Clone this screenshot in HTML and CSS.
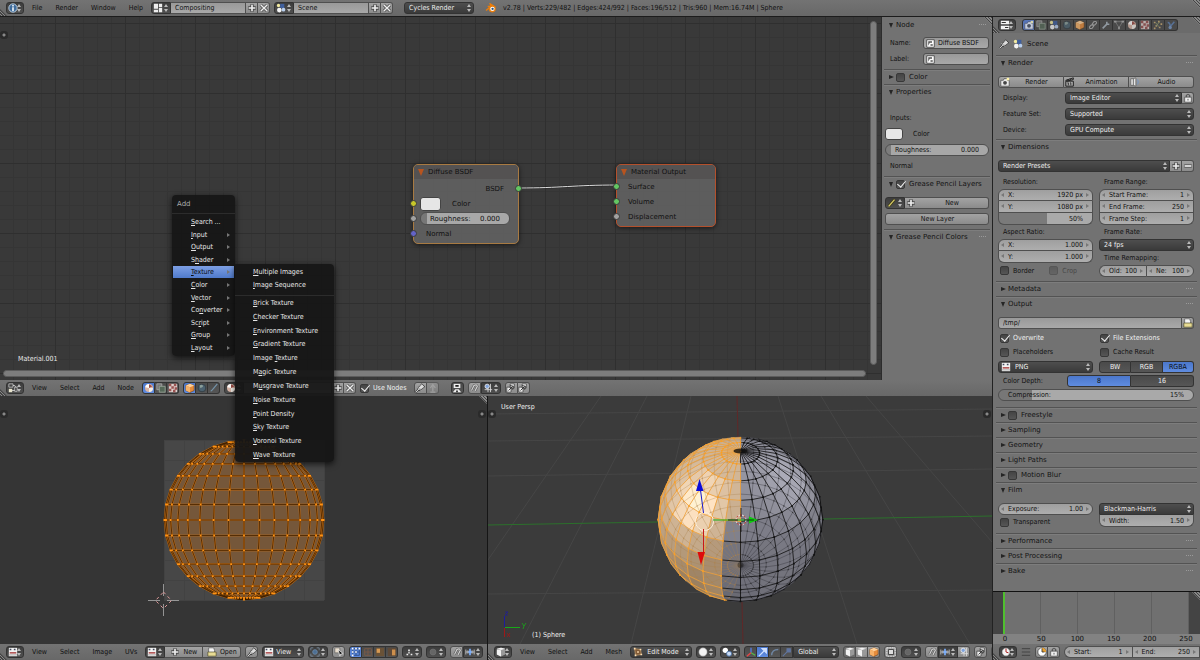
FILE: index.html
```html
<!DOCTYPE html>
<html lang="en">
<head>
<meta charset="utf-8">
<title>Blender</title>
<link rel="stylesheet" href="styles.css">
</head>
<body>
<svg class="defs" aria-hidden="true">
  <symbol id="i-info" viewBox="0 0 12 12"><circle cx="6" cy="6" r="5" fill="#3f6c9c" stroke="#cfe0ee" stroke-width="1"/><path d="M6 2.5v1.6M6 5v4.5" stroke="#fff" stroke-width="1.8"/></symbol>
  <symbol id="i-layout" viewBox="0 0 12 12"><path d="M1 1h5v6H1zM7 1h4v4H7zM1 8h5v3H1zM7 6h4v5H7z" fill="#ededed"/></symbol>
  <symbol id="i-scene" viewBox="0 0 12 12"><circle cx="3" cy="3" r="2" fill="#f1e9a0"/><path d="M5 1h5v5H5z" fill="#3f5f9d"/><circle cx="4" cy="8.500" r="2.800" fill="#f4f4f4"/><circle cx="9" cy="8" r="2.200" fill="#b9cfee"/></symbol>
  <symbol id="i-plus" viewBox="0 0 12 12"><path d="M6 1.500v9M1.500 6h9" stroke="#444" stroke-width="4"/><path d="M6 2v8M2 6h8" stroke="#eee" stroke-width="2"/></symbol>
  <symbol id="i-minus" viewBox="0 0 12 12"><path d="M1.500 6h9" stroke="#555" stroke-width="4"/><path d="M2 6h8" stroke="#eee" stroke-width="2"/></symbol>
  <symbol id="i-x" viewBox="0 0 12 12"><path d="M2 2l8 8M10 2l-8 8" stroke="#444" stroke-width="3.400"/><path d="M2 2l8 8M10 2l-8 8" stroke="#eee" stroke-width="1.700"/></symbol>
  <symbol id="i-blender" viewBox="0 0 14 12"><path d="M1 9l6-5H3M7 4L6 1l6 4" fill="none" stroke="#e87d0d" stroke-width="1.600"/><circle cx="8.500" cy="7" r="4.300" fill="#e87d0d"/><circle cx="8.700" cy="7" r="2.600" fill="#fff"/><circle cx="8.900" cy="7" r="1.400" fill="#265787"/></symbol>
  <symbol id="i-nodes" viewBox="0 0 12 12"><path d="M3 3h5l2 3M4 9h5" fill="none" stroke="#ddd"/><path d="M1 1h5v4H1zM8 5h3v5H8z" fill="#444" stroke="#ddd" stroke-width=".8"/><path d="M1 7h4v4H1z" fill="#e8e4cc"/></symbol>
  <symbol id="i-material" viewBox="0 0 12 12"><circle cx="6" cy="6" r="4.800" fill="#d9b5a6"/><path d="M6 6h4.800a4.800 4.800 0 0 1-4.800 4.800z" fill="#f3efe8"/><path d="M1.500 5a4.800 4.800 0 0 1 5-3.800L6 6z" fill="#fff"/><path d="M6 1.500L10 4 6 6z" fill="#9c4a44"/></symbol>
  <symbol id="i-composite" viewBox="0 0 12 12"><path d="M1 1h6v7H1z" fill="#777" stroke="#aaa"/><path d="M4 4h7v7H4z" fill="#556858" stroke="#98a598"/></symbol>
  <symbol id="i-texture" viewBox="0 0 12 12"><path d="M1 1h10v10H1z" fill="#dccfcd"/><path d="M1 1h3v3H1zM7 1h3v3H7zM4 4h3v3H4zM8 5h3v3H8zM1 7h3v3H1zM6 8h3v3H6z" fill="#9a5351"/></symbol>
  <symbol id="i-cube" viewBox="0 0 12 12"><path d="M1 3l5-2 5 2v6l-5 2.500L1 9z" fill="#e58c3c" stroke="#573111" stroke-width=".6"/><path d="M1 3l5 2 5-2-5-2z" fill="#ffd19c"/><path d="M1 3l5 2v6.500L1 9z" fill="#f6b168"/></symbol>
  <symbol id="i-whitecube" viewBox="0 0 12 12"><path d="M1 2l5-1 5 1v7l-5 2.500L1 9z" fill="#999"/><path d="M1 3l5 1v7.500L1 9zM1 2l5-1 5 1-5 1.500z" fill="#f2f2f2"/></symbol>
  <symbol id="i-world" viewBox="0 0 12 12"><circle cx="6" cy="6" r="4.600" fill="#4c6270" stroke="#303a40"/><path d="M3 3q3-2 4 0t-3 3z" fill="#8b9f9b"/></symbol>
  <symbol id="i-line" viewBox="0 0 12 12"><path d="M2 10q2-1 3-3l5-6" fill="none" stroke="#7392a8" stroke-width="1.400"/></symbol>
  <symbol id="i-pin" viewBox="0 0 12 12"><path d="M1 11l4-4M3 5l4 4M5 6l3-4 2.500 2.500L7 7z" stroke="#444" stroke-width="2.400" fill="#eee"/><path d="M1 11l4-4M3 5l4 4M5 6l3-4 2.500 2.500L7 7z" stroke="#ddd" stroke-width="1.100" fill="#ddd"/></symbol>
  <symbol id="i-up" viewBox="0 0 12 12"><path d="M4 11h6M7 10V4M4 6l3-4 3 4" stroke="#c2c2c2" fill="none" stroke-width="1.500"/></symbol>
  <symbol id="i-backdrop" viewBox="0 0 12 12"><path d="M2 1h8v5H2z" fill="#eee"/><path d="M1 11l3-3.500h4l3 3.500z" fill="#eee"/><path d="M4 2.500h4v2H4zM5 9h2v2H5z" fill="#222"/></symbol>
  <symbol id="i-magnet" viewBox="0 0 12 12"><path d="M3 9L6 3q3-2 4 1L7 10" fill="none" stroke="#555" stroke-width="2.800"/><path d="M3 9L6 3q3-2 4 1L7 10" fill="none" stroke="#d0d0d0" stroke-width="1.400"/></symbol>
  <symbol id="i-snap" viewBox="0 0 12 12"><path d="M2 8h9M6 5v6M9 1v10" stroke="#ddd" fill="none"/><circle cx="5" cy="4" r="2.600" fill="#7fa3dc" stroke="#eee"/></symbol>
  <symbol id="i-incr" viewBox="0 0 12 12"><path d="M1 3v6M3.500 4v4M8.500 4v4M11 3v6M1 6h10" stroke="#ccc"/><path d="M6 2v8M4 6h4" stroke="#7db1ff" stroke-width="2"/></symbol>
  <symbol id="i-copy" viewBox="0 0 12 12"><path d="M1 5h5v6H1zM5 1h5v5H5z" fill="#eee" stroke="#333" stroke-width=".8"/><path d="M3 9l5-5M5 3l4 1-1 4" stroke="#222" fill="none"/></symbol>
  <symbol id="i-image" viewBox="0 0 12 12"><path d="M1 1h10v10H1z" fill="#f2f2f2"/><path d="M2 6h8v2H2z" fill="#b35a5a"/><path d="M2 2h2v2H2zM7 2h2v2H7z" fill="#43485b"/><path d="M1 9h10v1H1z" fill="#999"/></symbol>
  <symbol id="i-folder" viewBox="0 0 12 12"><path d="M2 1h6l1 3v5H2z" fill="#f5f5f5" stroke="#444" stroke-width=".7"/><path d="M1 6h10v5H1z" fill="#e8dc94" stroke="#4d4a2c" stroke-width=".8"/></symbol>
  <symbol id="i-pivot" viewBox="0 0 12 12"><path d="M1 4V1h3M8 1h3v3M11 8v3H8M4 11H1V8" fill="none" stroke="#7d8ea0"/><circle cx="6" cy="6" r="2.800" fill="#4d6f94" stroke="#6c89a7"/></symbol>
  <symbol id="i-cursor" viewBox="0 0 12 12"><path d="M1 1h6v6H1z" fill="#e7dccb" stroke="#555" stroke-width=".7"/><path d="M5 3l6 5-3 .5L7 11z" fill="#111" stroke="#fff" stroke-width=".8"/></symbol>
  <symbol id="i-verts" viewBox="0 0 12 12"><path d="M2 2h8v8H2zM6 2v8M2 6h8" fill="none" stroke="#2e4d86"/><path d="M1 1h2v2H1zM5 1h2v2H5zM9 1h2v2H9zM1 5h2v2H1zM5 5h2v2H5zM1 9h2v2H1z" fill="#fff"/></symbol>
  <symbol id="i-edges" viewBox="0 0 12 12"><path d="M2 2h8v8H2zM6 2v8M2 6h8" fill="none" stroke="#7d5a46"/></symbol>
  <symbol id="i-face" viewBox="0 0 12 12"><path d="M1 1h10v10H1z" fill="#6a5237"/><path d="M2 2h4v5H2z" fill="#d79a54"/></symbol>
  <symbol id="i-island" viewBox="0 0 12 12"><path d="M1 1h10v10H1z" fill="#5d4938"/><path d="M6 3h4v7H6z" fill="#cd8f4c"/></symbol>
  <symbol id="i-dots" viewBox="0 0 12 12"><path d="M3 8h2v2H3zM5 3h2v2H5zM8 8h2v2H8z" fill="#eee"/><circle cx="6" cy="7" r="1.200" fill="#bbb"/></symbol>
  <symbol id="i-ring" viewBox="0 0 12 12"><circle cx="6" cy="6" r="3.500" fill="#666" stroke="#707070"/></symbol>
  <symbol id="i-ball" viewBox="0 0 12 12"><circle cx="6" cy="6" r="5" fill="#f3f3f3" stroke="#888" stroke-width=".6"/></symbol>
  <symbol id="i-two" viewBox="0 0 12 12"><circle cx="4" cy="4" r="3.200" fill="#fff"/><circle cx="8.500" cy="8" r="3" fill="#c9dbf4" stroke="#436ca5"/></symbol>
  <symbol id="i-edit" viewBox="0 0 12 12"><path d="M2 2l7 1 1 6-7 1z" fill="#805a36" stroke="#b99466"/><path d="M1 1h2v2H1zM8 2h2v2H8zM9 8h2v2H9zM2 9h2v2H2zM5 5h2v2H5z" fill="#ffe0b4"/></symbol>
  <symbol id="i-axes" viewBox="0 0 12 12"><path d="M6 7V1" stroke="#5a7fe8" stroke-width="1.500"/><path d="M6 7l5 3" stroke="#55bb44" stroke-width="1.500"/><path d="M6 7l-5 4" stroke="#e44" stroke-width="1.500"/></symbol>
  <symbol id="i-arrow" viewBox="0 0 12 12"><path d="M1 11l6-6M5 2h5v5z" stroke="#cfe0ff" stroke-width="1.500" fill="#cfe0ff"/></symbol>
  <symbol id="i-arc" viewBox="0 0 12 12"><path d="M2 10q0-7 8-7" stroke="#6f86a3" stroke-width="1.600" fill="none"/></symbol>
  <symbol id="i-scale" viewBox="0 0 12 12"><path d="M1 11l6-6M6 2h4v4H6z" stroke="#6075a0" stroke-width="1.300" fill="#6075a0"/></symbol>
  <symbol id="i-select" viewBox="0 0 12 12"><path d="M1 1h10v10H1z" fill="none" stroke="#f0f0f0" stroke-dasharray="2 1"/><path d="M3 3h6v6H3z" fill="#ddd" stroke="#333"/></symbol>
  <symbol id="i-props" viewBox="0 0 12 12"><path d="M1 1h10v4H1zM1 7h10v4H1z" fill="#f2f2f2"/><path d="M2 3h5M6 9h4" stroke="#333" stroke-width="1.300"/></symbol>
  <symbol id="i-camera" viewBox="0 0 12 12"><path d="M1 4h3l1-2h4v2h2v7H1z" fill="#e9e9e9" stroke="#333" stroke-width=".7"/><circle cx="6" cy="7" r="2.300" fill="#444"/><path d="M8 1h3v3H8z" fill="#fff3a8"/></symbol>
  <symbol id="i-clap" viewBox="0 0 12 12"><path d="M1 5h9v6H1zM1 4l9-3v2L2 5z" fill="#aaa" stroke="#222" stroke-width="1.200"/><path d="M3 7h1v3M6 7h1v3M3 3l1 2M6 2l1 2" stroke="#222" fill="none"/></symbol>
  <symbol id="i-speaker" viewBox="0 0 12 12"><path d="M1 2h3l3-1v10l-3-1H1z" fill="#e5e5e5" stroke="#555" stroke-width=".8"/><path d="M4 2v8" stroke="#555"/><path d="M9 3q2 3 0 6" stroke="#6a94cc" fill="none"/></symbol>
  <symbol id="i-link" viewBox="0 0 12 12"><path d="M2 8q-1 3 3 2l2-3q0-2-3-1zM10 4q1-3-3-2L5 5q0 2 3 1z" fill="none" stroke="#b0b0b0" stroke-width="1.300"/></symbol>
  <symbol id="i-wrench" viewBox="0 0 12 12"><path d="M2 10l5-5M7 2v3h3" stroke="#a9b5c0" stroke-width="1.900" fill="none"/></symbol>
  <symbol id="i-data" viewBox="0 0 12 12"><path d="M1.500 2h9L6 9zM6 9v2" fill="none" stroke="#888"/><path d="M0 1h3v2H0zM9 1h3v2H9zM5 8h2v3H5z" fill="#aaa"/></symbol>
  <symbol id="i-parts" viewBox="0 0 12 12"><path d="M1 2h2v2H1zM6 1h2v2H6zM9 4h2v2H9zM3 6h2v2H3zM7 8h2v2H7zM1 9h2v2H1z" fill="#c8a870"/><path d="M3 3l4 5M8 2l-4 5" stroke="#8f9e70"/></symbol>
  <symbol id="i-phys" viewBox="0 0 12 12"><path d="M2 3q3 0 3 5l5-6" stroke="#5c7eb0" stroke-width="1.800" fill="none"/><circle cx="5" cy="9" r="2" fill="#7898c5"/></symbol>
  <symbol id="i-lock" viewBox="0 0 12 12"><path d="M4 6V3q2-3 4 0v3" fill="none" stroke="#555" stroke-width="1.400"/><path d="M2 5h8v6H2z" fill="#eee" stroke="#444" stroke-width=".8"/><path d="M6 7v2" stroke="#444"/></symbol>
  <symbol id="i-node" viewBox="0 0 12 12"><path d="M1 1h10v10H1z" fill="#fff" stroke="#333"/><path d="M3 9V3h5v2H5M6 7h3v2H6z" fill="#555"/></symbol>
  <symbol id="i-pencil" viewBox="0 0 12 12"><path d="M2 10l7-8" stroke="#3b3810" stroke-width="3.200"/><path d="M2 10l7-8" stroke="#d8cc6b" stroke-width="1.600"/></symbol>
  <symbol id="i-clock" viewBox="0 0 12 12"><circle cx="6" cy="6" r="5" fill="#f3f3f3" stroke="#333" stroke-width=".8"/><path d="M6 2v4l3 1" stroke="#a22" fill="none" stroke-width="1.200"/></symbol>
  <symbol id="i-auto" viewBox="0 0 12 12"><circle cx="6" cy="6" r="5" fill="#fff" stroke="#333" stroke-width=".8"/><path d="M6 6V1a5 5 0 0 1 5 5z" fill="#e8a030"/><path d="M6 2v4h3" stroke="#333" fill="none"/></symbol>
  <symbol id="i-menu" viewBox="0 0 12 12"><path d="M1 2h10M1 6h10M1 10h10" stroke="#444" stroke-width="1.200"/></symbol>
</svg>

<div class="app">
  <header class="bar topbar">
    <button class="dd" aria-label="Editor type"><svg class="ic"><use href="#i-info"/></svg></button>
    <nav class="menus"><button>File</button><button>Render</button><button>Window</button><button>Help</button></nav>
    <div class="group idfield">
      <button class="dd" aria-label="Screen layout"><svg class="ic"><use href="#i-layout"/></svg></button>
      <input class="text" aria-label="Screen" value="Compositing">
      <button class="lt" aria-label="Add screen"><svg class="ic"><use href="#i-plus"/></svg></button>
      <button class="lt" aria-label="Delete screen"><svg class="ic"><use href="#i-x"/></svg></button>
    </div>
    <div class="group idfield">
      <button class="dd" aria-label="Browse scene"><svg class="ic"><use href="#i-scene"/></svg></button>
      <input class="text" aria-label="Scene" value="Scene">
      <button class="lt" aria-label="Add scene"><svg class="ic"><use href="#i-plus"/></svg></button>
      <button class="lt" aria-label="Delete scene"><svg class="ic"><use href="#i-x"/></svg></button>
    </div>
    <span class="sel engine"><select aria-label="Render engine"><option>Cycles Render</option></select></span>
    <svg class="ic logo"><use href="#i-blender"/></svg>
    <span class="stats">v2.78 | Verts:229/482 | Edges:424/992 | Faces:196/512 | Tris:960 | Mem:16.74M | Sphere</span>
    <span class="grip"></span>
  </header>

  <main class="work">
    <div class="left">
      <section class="node-editor">
        <div class="node-main">
          <div class="canvas">
            <svg class="wire" width="800" height="300"><path d="M519 171C560 171 575 168 617 168" fill="none" stroke="#222" stroke-width="2"/><path d="M519 171C560 171 575 168 617 168" fill="none" stroke="#ddd" stroke-width="1"/></svg>
            <div class="node diffuse">
              <h3>Diffuse BSDF</h3>
              <p class="out">BSDF<i class="sock green"></i></p>
              <p class="in"><i class="sock yellow"></i><span class="swatch"></span>Color</p>
              <p class="in"><i class="sock gray"></i><label class="slider"><span>Roughness:</span><input value="0.000"></label></p>
              <p class="in"><i class="sock violet"></i>Normal</p>
            </div>
            <div class="node output">
              <h3>Material Output</h3>
              <p class="in"><i class="sock green"></i>Surface</p>
              <p class="in"><i class="sock green"></i>Volume</p>
              <p class="in"><i class="sock gray"></i>Displacement</p>
            </div>
            <span class="tag">Material.001</span>
            <span class="knob tl"></span>
            <span class="hscroll"></span><span class="vscroll"></span>
          </div>
          <aside class="npanel">
            <span class="grip"></span>
            <h2 class="ttl open first grab">Node</h2>
            <div class="rows n1">
              <label class="field"><span>Name:</span><span class="box"><svg class="ic"><use href="#i-node"/></svg><input value="Diffuse BSDF"></span></label>
              <label class="field"><span>Label:</span><span class="box"><svg class="ic"><use href="#i-node"/></svg><input value=""></span></label>
            </div>
            <h2 class="ttl"><label><input type="checkbox">Color</label></h2>
            <h2 class="ttl open">Properties</h2>
            <div class="rows n2">
              <span class="line">Inputs:</span>
              <span class="line color"><span class="swatch"></span>Color</span>
              <label class="slider"><span>Roughness:</span><input value="0.000"></label>
              <span class="line">Normal</span>
            </div>
            <h2 class="ttl open"><label><input type="checkbox" checked>Grease Pencil Layers</label></h2>
            <div class="rows n3">
              <div class="group"><button class="dd" aria-label="Grease pencil"><svg class="ic"><use href="#i-pencil"/></svg></button><button class="lt grow"><svg class="ic"><use href="#i-plus"/></svg><span>New</span></button></div>
              <div class="group"><button class="lt grow"><span>New Layer</span></button></div>
            </div>
            <h2 class="ttl open grab">Grease Pencil Colors</h2>
          </aside>
        </div>
        <div class="bar">
          <button class="dd" aria-label="Editor type"><svg class="ic"><use href="#i-nodes"/></svg></button>
          <nav class="menus"><button>View</button><button>Select</button><button>Add</button><button>Node</button></nav>
          <div class="group dark"><button class="on" aria-label="Shader nodes"><svg class="ic"><use href="#i-material"/></svg></button><button aria-label="Compositing nodes"><svg class="ic"><use href="#i-composite"/></svg></button><button aria-label="Texture nodes"><svg class="ic"><use href="#i-texture"/></svg></button></div>
          <div class="group dark"><button class="on" aria-label="Object"><svg class="ic"><use href="#i-cube"/></svg></button><button aria-label="World"><svg class="ic"><use href="#i-world"/></svg></button><button aria-label="Line style"><svg class="ic"><use href="#i-line"/></svg></button></div>
          <div class="group matfield"><button class="dd" aria-label="Browse material"><svg class="ic"><use href="#i-material"/></svg></button><input class="text" aria-label="Material name" value=""><button class="lt" aria-label="Add"><svg class="ic"><use href="#i-plus"/></svg></button><button class="lt" aria-label="Unlink"><svg class="ic"><use href="#i-x"/></svg></button></div>
          <label class="check lit"><input type="checkbox" checked>Use Nodes</label>
          <div class="group gap-l"><button class="lt" aria-label="Pin"><svg class="ic"><use href="#i-pin"/></svg></button><button class="lt dim" aria-label="Parent"><svg class="ic"><use href="#i-up"/></svg></button></div>
          <div class="group dark gap-xl"><button aria-label="Backdrop"><svg class="ic"><use href="#i-backdrop"/></svg></button></div>
          <div class="group"><button class="lt" aria-label="Snap"><svg class="ic"><use href="#i-magnet"/></svg></button><button class="dd" aria-label="Snap element"><svg class="ic"><use href="#i-snap"/></svg></button></div>
          <div class="group"><button class="lt" aria-label="Copy"><svg class="ic"><use href="#i-copy"/></svg></button><button class="lt" aria-label="Paste"><svg class="ic"><use href="#i-copy"/></svg></button></div>
        </div>
      </section>

      <div class="lower">
        <section class="uv">
          <div class="view"><svg id="uv-mesh" viewBox="0 396 487 248" preserveAspectRatio="xMidYMid meet"></svg><span class="knob tl"></span><span class="knob tr"></span><span class="grip"></span></div>
          <div class="bar">
            <button class="dd" aria-label="Editor type"><svg class="ic"><use href="#i-image"/></svg></button>
            <nav class="menus"><button>View</button><button>Select</button><button>Image</button><button>UVs</button></nav>
            <div class="group"><button class="dd" aria-label="Browse image"><svg class="ic"><use href="#i-image"/></svg></button><button class="lt word"><svg class="ic"><use href="#i-plus"/></svg>New</button><button class="lt word"><svg class="ic"><use href="#i-folder"/></svg>Open</button></div>
            <div class="group"><button class="lt" aria-label="Pin"><svg class="ic"><use href="#i-pin"/></svg></button></div>
            <button class="dd word"><svg class="ic"><use href="#i-image"/></svg>View</button>
            <button class="dd" aria-label="Pivot"><svg class="ic"><use href="#i-pivot"/></svg></button>
            <div class="group"><button class="lt" aria-label="Sync selection"><svg class="ic"><use href="#i-cursor"/></svg></button></div>
            <div class="group dark"><button class="on" aria-label="Vertex"><svg class="ic"><use href="#i-verts"/></svg></button><button aria-label="Edge"><svg class="ic"><use href="#i-edges"/></svg></button><button aria-label="Face"><svg class="ic"><use href="#i-face"/></svg></button><button aria-label="Island"><svg class="ic"><use href="#i-island"/></svg></button></div>
            <button class="dd" aria-label="Sticky"><svg class="ic"><use href="#i-dots"/></svg></button>
            <button class="dd" aria-label="Proportional editing"><svg class="ic"><use href="#i-ring"/></svg></button>
            <div class="group"><button class="lt" aria-label="Snap"><svg class="ic"><use href="#i-magnet"/></svg></button><button class="dd" aria-label="Snap element"><svg class="ic"><use href="#i-incr"/></svg></button></div>
            <div class="group"><button class="lt" aria-label="More"></button></div>
          </div>
        </section>
        <section class="view3d">
          <div class="view"><svg id="mesh" viewBox="488 396 504 248" preserveAspectRatio="xMidYMid slice"></svg><span class="persp">User Persp</span><span class="obname">(1) Sphere</span><span class="knob tl"></span><span class="knob tr"></span></div>
          <div class="bar">
            <button class="dd" aria-label="Editor type"><svg class="ic"><use href="#i-whitecube"/></svg></button>
            <nav class="menus"><button>View</button><button>Select</button><button>Add</button><button>Mesh</button></nav>
            <span class="sel icon mode"><svg class="ic"><use href="#i-edit"/></svg><select aria-label="Mode"><option>Edit Mode</option></select></span>
            <button class="dd" aria-label="Shading"><svg class="ic"><use href="#i-ball"/></svg></button>
            <button class="dd" aria-label="Pivot"><svg class="ic"><use href="#i-two"/></svg></button>
            <div class="group dark"><button aria-label="Manipulator"><svg class="ic"><use href="#i-axes"/></svg></button><button class="on" aria-label="Translate"><svg class="ic"><use href="#i-arrow"/></svg></button><button aria-label="Rotate"><svg class="ic"><use href="#i-arc"/></svg></button><button aria-label="Scale"><svg class="ic"><use href="#i-scale"/></svg></button><span class="sel orient"><select aria-label="Orientation"><option>Global</option></select></span></div>
            <div class="group"><button class="lt press" aria-label="Vertex select"><svg class="ic"><use href="#i-whitecube"/></svg></button><button class="lt" aria-label="Edge select"><svg class="ic"><use href="#i-whitecube"/></svg></button><button class="lt" aria-label="Face select"><svg class="ic"><use href="#i-cube"/></svg></button></div>
            <div class="group"><button class="lt" aria-label="Limit selection"><svg class="ic"><use href="#i-select"/></svg></button></div>
            <button class="dd" aria-label="Proportional editing"><svg class="ic"><use href="#i-ring"/></svg></button>
            <div class="group"><button class="lt" aria-label="Snap"><svg class="ic"><use href="#i-magnet"/></svg></button><button class="dd" aria-label="Snap element"><svg class="ic"><use href="#i-incr"/></svg></button><button class="lt" aria-label="Snap target"><svg class="ic"><use href="#i-snap"/></svg></button></div>
            <div class="group"><button class="lt" aria-label="Render preview"><svg class="ic"><use href="#i-copy"/></svg></button></div>
            <div class="group"><button class="lt" aria-label="More"></button></div>
          </div>
        </section>
      </div>
    </div>

    <div class="right">
      <section class="props">
        <span class="grip"></span>
        <div class="bar tabs">
          <button class="dd" aria-label="Editor type"><svg class="ic"><use href="#i-props"/></svg></button>
          <div class="group dark"><button class="on" aria-label="Render"><svg class="ic"><use href="#i-camera"/></svg></button><button aria-label="Render layers"><svg class="ic"><use href="#i-composite"/></svg></button><button aria-label="Scene"><svg class="ic"><use href="#i-scene"/></svg></button><button aria-label="World"><svg class="ic"><use href="#i-world"/></svg></button><button aria-label="Object"><svg class="ic"><use href="#i-cube"/></svg></button><button aria-label="Constraints"><svg class="ic"><use href="#i-link"/></svg></button><button aria-label="Modifiers"><svg class="ic"><use href="#i-wrench"/></svg></button><button aria-label="Data"><svg class="ic"><use href="#i-data"/></svg></button><button aria-label="Material"><svg class="ic"><use href="#i-material"/></svg></button><button aria-label="Texture"><svg class="ic"><use href="#i-texture"/></svg></button><button aria-label="Particles"><svg class="ic"><use href="#i-parts"/></svg></button><button aria-label="Physics"><svg class="ic"><use href="#i-phys"/></svg></button></div>
        </div>
        <div class="crumb"><svg class="ic"><use href="#i-pin"/></svg><svg class="ic"><use href="#i-scene"/></svg>Scene</div>

        <h2 class="ttl open grab">Render</h2>
        <div class="rows r1">
          <div class="group"><button class="lt grow"><svg class="ic"><use href="#i-camera"/></svg><span>Render</span></button><button class="lt grow"><svg class="ic"><use href="#i-clap"/></svg><span>Animation</span></button><button class="lt grow"><svg class="ic"><use href="#i-speaker"/></svg><span>Audio</span></button></div>
          <div class="pair"><label for="disp">Display:</label><div class="group"><span class="sel"><select id="disp"><option>Image Editor</option></select></span><button class="lt" aria-label="Lock interface"><svg class="ic"><use href="#i-lock"/></svg></button></div></div>
          <div class="pair"><label for="feat">Feature Set:</label><span class="sel"><select id="feat"><option>Supported</option></select></span></div>
          <div class="pair"><label for="dev">Device:</label><span class="sel"><select id="dev"><option>GPU Compute</option></select></span></div>
        </div>

        <h2 class="ttl open">Dimensions</h2>
        <div class="rows r2">
          <div class="group"><span class="sel"><select aria-label="Render presets"><option>Render Presets</option></select></span><button class="lt" aria-label="Add preset"><svg class="ic"><use href="#i-plus"/></svg></button><button class="lt" aria-label="Remove preset"><svg class="ic"><use href="#i-minus"/></svg></button></div>
          <div class="cols">
            <div>
              <span class="cap">Resolution:</span>
              <div class="stack"><label class="num"><span>X:</span><input value="1920 px"></label><label class="num"><span>Y:</span><input value="1080 px"></label><label class="num pct"><input aria-label="Resolution percentage" value="50%"></label></div>
              <span class="cap">Aspect Ratio:</span>
              <div class="stack"><label class="num"><span>X:</span><input value="1.000"></label><label class="num"><span>Y:</span><input value="1.000"></label></div>
              <div class="checks"><label class="check"><input type="checkbox">Border</label><label class="check off"><input type="checkbox" disabled>Crop</label></div>
            </div>
            <div>
              <span class="cap">Frame Range:</span>
              <div class="stack"><label class="num"><span>Start Frame:</span><input value="1"></label><label class="num"><span>End Frame:</span><input value="250"></label><label class="num"><span>Frame Step:</span><input value="1"></label></div>
              <span class="cap">Frame Rate:</span>
              <span class="sel rate"><select aria-label="Frame rate"><option>24 fps</option></select></span>
              <span class="cap">Time Remapping:</span>
              <div class="duo"><label class="num"><span>Old:</span><input value="100"></label><label class="num"><span>Ne:</span><input value="100"></label></div>
            </div>
          </div>
        </div>

        <h2 class="ttl grab">Metadata</h2>
        <h2 class="ttl open grab">Output</h2>
        <div class="rows r3">
          <div class="group"><input class="text" aria-label="Output path" value="/tmp/"><button class="lt" aria-label="Browse"><svg class="ic"><use href="#i-folder"/></svg></button></div>
          <div class="checks grid"><label class="check lit"><input type="checkbox" checked>Overwrite</label><label class="check lit"><input type="checkbox" checked>File Extensions</label><label class="check"><input type="checkbox">Placeholders</label><label class="check"><input type="checkbox">Cache Result</label></div>
          <div class="cols"><span class="sel icon"><svg class="ic"><use href="#i-image"/></svg><select aria-label="Format"><option>PNG</option></select></span><div class="group dark seg"><button>BW</button><button>RGB</button><button class="on">RGBA</button></div></div>
          <div class="depth"><span>Color Depth:</span><div class="group dark seg"><button class="on">8</button><button>16</button></div></div>
          <label class="slider comp"><span>Compression:</span><input value="15%"></label>
        </div>

        <h2 class="ttl"><label><input type="checkbox">Freestyle</label></h2>
        <h2 class="ttl">Sampling</h2>
        <h2 class="ttl">Geometry</h2>
        <h2 class="ttl">Light Paths</h2>
        <h2 class="ttl"><label><input type="checkbox">Motion Blur</label></h2>
        <h2 class="ttl open">Film</h2>
        <div class="rows r4">
          <div class="cols">
            <div><label class="num alone"><span>Exposure:</span><input value="1.00"></label><label class="check"><input type="checkbox">Transparent</label></div>
            <div class="stack"><span class="sel"><select aria-label="Filter type"><option>Blackman-Harris</option></select></span><label class="num"><span>Width:</span><input value="1.50"></label></div>
          </div>
        </div>
        <h2 class="ttl grab">Performance</h2>
        <h2 class="ttl grab">Post Processing</h2>
        <h2 class="ttl grab">Bake</h2>
      </section>

      <section class="timeline">
        <div class="track"><span class="range"></span><span class="now"></span><span class="grip"></span></div>
        <div class="ruler"><span>0</span><span>50</span><span>100</span><span>150</span><span>200</span><span>250</span></div>
        <div class="bar">
          <button class="dd" aria-label="Editor type"><svg class="ic"><use href="#i-clock"/></svg></button>
          <svg class="ic"><use href="#i-menu"/></svg>
          <div class="group"><button class="lt" aria-label="Preview range"><svg class="ic"><use href="#i-auto"/></svg></button><button class="lt" aria-label="Lock time"><svg class="ic"><use href="#i-lock"/></svg></button></div>
          <div class="duo"><label class="num"><span>Start:</span><input value="1"></label><label class="num"><span>End:</span><input value="250"></label></div>
        </div>
      </section>
    </div>
  </main>

  <div class="popup add">
    <h4>Add</h4>
    <ul>
      <li><u>S</u>earch ...</li><li class="sub"><u>I</u>nput</li><li class="sub"><u>O</u>utput</li><li class="sub">S<u>h</u>ader</li><li class="sub hot"><u>T</u>exture</li><li class="sub"><u>C</u>olor</li><li class="sub"><u>V</u>ector</li><li class="sub">Co<u>n</u>verter</li><li class="sub">Sc<u>r</u>ipt</li><li class="sub"><u>G</u>roup</li><li class="sub"><u>L</u>ayout</li>
    </ul>
  </div>
  <div class="popup textures">
    <ul class="two"><li><u>M</u>ultiple Images</li><li><u>I</u>mage Sequence</li></ul>
    <ul class="many"><li><u>B</u>rick Texture</li><li><u>C</u>hecker Texture</li><li><u>E</u>nvironment Texture</li><li><u>G</u>radient Texture</li><li>Image <u>T</u>exture</li><li>M<u>a</u>gic Texture</li><li>M<u>u</u>sgrave Texture</li><li><u>N</u>oise Texture</li><li><u>P</u>oint Density</li><li><u>S</u>ky Texture</li><li><u>V</u>oronoi Texture</li><li><u>W</u>ave Texture</li></ul>
  </div>
</div>
<script src="script.js"></script>
</body>
</html>
```
FILE: styles.css
```css
* { box-sizing: border-box; }
html, body { height: 100%; margin: 0; }
body { font: 7px/12px "DejaVu Sans Condensed", "DejaVu Sans", sans-serif; color: #111; background: #393939; overflow: hidden; }
button, input, select { font: inherit; color: inherit; margin: 0; padding: 0; border: 0; background: none; min-width: 0; border-radius: 0; outline: 0; }
h2, h3, h4, p, ul { margin: 0; padding: 0; font-weight: normal; list-style: none; }
.defs { position: absolute; width: 0; height: 0; }
.ic { width: 10px; height: 10px; flex: none; display: block; }
.app { position: relative; height: 100vh; display: flex; flex-direction: column; }

/* buttons and fields */
.dd, .sel { position: relative; height: 12px; display: flex; align-items: center; color: #eee; background: linear-gradient(#3c3c3c, #505050); border: 1px solid #333; border-radius: 3px; }
.dd { width: 20px; padding-left: 1px; }
.dd.word { width: 42px; gap: 2px; }
.dd::before, .sel::before { content: ""; position: absolute; right: 2px; top: 1px; border: 2px solid transparent; border-top: 0; border-bottom: 3px solid #bbb; }
.dd::after, .sel::after { content: ""; position: absolute; right: 2px; bottom: 1px; border: 2px solid transparent; border-bottom: 0; border-top: 3px solid #bbb; }
.sel { flex: 1; min-width: 0; background: linear-gradient(#4e4e4e, #3a3a3a); }
.sel select { appearance: none; flex: 1; width: 100%; padding: 0 4px; height: 10px; line-height: 10px; }
.sel.icon { padding-left: 2px; }
.group { display: flex; height: 12px; min-width: 0; }
.group > * { border-radius: 0; }
.group > :first-child { border-radius: 3px 0 0 3px; }
.group > :last-child { border-radius: 0 3px 3px 0; }
.group > :only-child { border-radius: 3px; }
.lt { width: 12px; height: 12px; display: flex; align-items: center; justify-content: center; background: linear-gradient(#a3a3a3, #8b8b8b); border: 1px solid #4f4f4f; border-left-width: 0; }
.lt:first-child { border-left-width: 1px; width: 13px; }
.lt.word { width: 38px; gap: 3px; }
.lt.grow { flex: 1; width: auto; justify-content: flex-start; padding-left: 1px; }
.lt.grow span { flex: 1; text-align: center; }
.lt.press { background: #6b6b6b; }
.lt.dim { opacity: .6; }
.dark > button { width: 12px; height: 12px; display: flex; align-items: center; justify-content: center; background: linear-gradient(#4a4a4a, #565656); border: 1px solid #333; border-left-width: 0; color: #eee; }
.dark > button:first-child { width: 13px; border-left-width: 1px; }
.dark > button.on { background: linear-gradient(#4b77cb, #5f8ce0); color: #0c0c0c; }
.seg { flex: 1; }
.dark.seg > button { flex: 1; width: auto; }
.text { height: 12px; padding: 0 4px; background: linear-gradient(#999, #a9a9a9); border: 1px solid #4f4f4f; border-left-width: 0; }
.text:first-child { border-left-width: 1px; flex: 1; }
.idfield .text { width: 75px; }
.matfield .text { width: 88px; }
.check { display: flex; align-items: center; gap: 4px; }
.lit { color: #f0f0f0; }
.off { opacity: .45; }
input[type=checkbox] { appearance: none; position: relative; flex: none; width: 9px; height: 9px; background: linear-gradient(#444, #565656); border: 1px solid #383838; border-radius: 2px; }
input[type=checkbox]:checked::after { content: ""; position: absolute; left: 2px; top: -2px; width: 4px; height: 7px; border: solid #f4f4f4; border-width: 0 1px 1px 0; transform: rotate(40deg); }
.num, .slider { position: relative; display: flex; align-items: center; height: 12px; padding: 0 9px; background: linear-gradient(#9f9f9f, #aeaeae); border: 1px solid #4f4f4f; min-width: 0; }
.num span, .slider span { flex: none; }
.num input, .slider input { flex: 1; width: 100%; text-align: right; height: 10px; }
.num::before, .num::after { content: ""; position: absolute; top: 3px; border: 2px solid transparent; }
.num::before { left: 2px; border-right: 3px solid #777; border-left: 0; }
.num::after { right: 3px; border-left: 3px solid #777; border-right: 0; }
.alone, .slider { border-radius: 6px; }
.slider { background: linear-gradient(90deg, #7c7c7c 5px, #a7a7a7 5px); }
.comp { background: linear-gradient(90deg, #777 17%, #a9a9a9 17%); }
.stack > * { border-top-width: 0; flex: none; }
.stack > :first-child { border-top-width: 1px; border-radius: 6px 6px 0 0; }
.stack > :last-child { border-radius: 0 0 6px 6px; }
.stack > .sel:first-child { border-radius: 3px 3px 0 0; }
.pct { background: linear-gradient(90deg, #7a7a7a 52%, #aaa 52%); }
.pct::before, .pct::after { display: none; }
.duo { display: flex; }
.duo > * { flex: 1; }
.duo > :first-child { border-radius: 6px 0 0 6px; border-right-width: 0; }
.duo > :last-child { border-radius: 0 6px 6px 0; }
.swatch { width: 18px; height: 12px; background: #e6e6e6; border: 1px solid #444; border-radius: 3px; flex: none; }

/* editor header bars */
.bar { position: relative; display: flex; align-items: center; gap: 4px; height: 16px; flex: none; padding-left: 6px; background: linear-gradient(#737373, #686868); overflow: hidden; white-space: nowrap; }
.bar > * { flex: none; }
.bar .sel { flex: none; }
.bar > .dd:first-child { width: 18px; }
.bar::before { content: ""; position: absolute; left: 0; bottom: 0; width: 7px; height: 7px; background: repeating-linear-gradient(45deg, #444 0 1px, #888 1px 2px); clip-path: polygon(0 0, 100% 100%, 0 100%); }
.topbar { height: 17px; border-bottom: 1px solid #1c1c1c; }
.menus { display: flex; gap: 13px; padding: 0 4px; }
.stats { padding-left: 2px; }
.engine { width: 70px; margin: 0 7px; }
.logo { width: 12px; }
.mode { width: 62px; }
.orient { width: 46px; }
.gap-l { margin-left: 3px; }
.gap-xl { margin-left: 8px; }

/* page skeleton */
.work { flex: 1; min-height: 0; display: grid; grid-template-columns: minmax(0, 1fr) 208px; }
.left { display: grid; grid-template-rows: minmax(0, 379fr) minmax(0, 264fr); min-width: 0; min-height: 0; }
.node-editor, .uv, .view3d, .right { display: flex; flex-direction: column; min-width: 0; min-height: 0; }
.node-main { flex: 1; min-height: 0; display: grid; grid-template-columns: minmax(0, 1fr) 111px; }
.lower { display: grid; grid-template-columns: minmax(0, 488fr) minmax(0, 504fr); min-height: 0; }
.grip { position: absolute; top: 0; right: 0; width: 8px; height: 8px; background: repeating-linear-gradient(45deg, #444 0 1px, #888 1px 2px); clip-path: polygon(0 0, 100% 0, 100% 100%); z-index: 1; }

/* node canvas */
.canvas { position: relative; overflow: hidden; background-color: #393939; background-image: linear-gradient(#2f2f2f 1px, transparent 1px), linear-gradient(90deg, #2f2f2f 1px, transparent 1px), linear-gradient(#353535 1px, transparent 1px), linear-gradient(90deg, #353535 1px, transparent 1px); background-size: 70px 70px, 70px 70px, 14px 14px, 14px 14px; background-position: 0 6px, 55px 0, 0 6px, 13px 0; }
.wire { position: absolute; left: 0; top: 0; }
.node { position: absolute; font-family: "DejaVu Sans", sans-serif; background: rgba(96, 96, 96, .93); border: 1px solid #a87a42; border-radius: 5px; box-shadow: 0 1px 5px rgba(0, 0, 0, .6); }
.node h3 { font-size: 7px; line-height: 14px; height: 14px; padding-left: 14px; background: #545252; border-radius: 4px 4px 0 0; position: relative; }
.node h3::before { content: ""; position: absolute; left: 4px; top: 4px; border: 3px solid transparent; border-top: 7px solid #b8541f; border-bottom: 0; }
.node p { position: relative; display: flex; align-items: center; height: 15px; padding-left: 11px; }
.diffuse { left: 413px; top: 147px; width: 106px; padding-bottom: 2px; }
.diffuse h3 { margin-bottom: 2px; }
.diffuse .out { justify-content: flex-end; padding-right: 14px; }
.diffuse .in { padding-left: 12px; }
.diffuse .swatch { width: 21px; height: 14px; margin-left: -6px; margin-right: 11px; }
.diffuse .slider { width: 90px; height: 13px; margin-left: -6px; background: linear-gradient(90deg, #777 6px, #a8a8a8 6px); }
.output { left: 616px; top: 147px; width: 100px; padding-bottom: 2px; border-color: #b4502c; }
.sock { position: absolute; left: -4px; top: 4px; width: 7px; height: 7px; border-radius: 50%; border: 1px solid #3a3a3a; }
.out .sock { left: auto; right: -4px; }
.green { background: #63c763; } .yellow { background: #c7c729; } .gray { background: #a1a1a1; } .violet { background: #6363c7; }
.tag { position: absolute; left: 18px; bottom: 15px; color: #e8e8e8; }
.hscroll, .vscroll { position: absolute; background: #7d7d7d; border-radius: 4px; border: 1px solid #5c5c5c; }
.hscroll { left: 3px; right: 15px; bottom: 3px; height: 7px; }
.vscroll { right: 4px; top: 4px; bottom: 15px; width: 7px; }
.knob { position: absolute; top: 14px; width: 8px; height: 8px; border-radius: 3px; background: radial-gradient(#888 1px, #2a2a2a 2px); }
.knob.tl { left: 0; } .knob.tr { right: 1px; }

/* panels */
.npanel, .props { position: relative; background: #727272; overflow: hidden; min-height: 0; }
.npanel { padding: 0 3px; border-left: 1px solid #2c2c2c; }
.props { flex: 1; border-bottom: 1px solid #111; }
.ttl { position: relative; display: flex; align-items: center; height: 15px; margin: 0 3px; padding-left: 12px; border-top: 1px solid #535353; box-shadow: inset 0 1px #7d7d7d; font: 7px/14px "DejaVu Sans", sans-serif; color: #141414; white-space: nowrap; }
.npanel .ttl { margin: 0 -1px; }
.npanel .first { border-top-color: transparent; box-shadow: none; }
.ttl::before { content: ""; position: absolute; left: 5px; top: 5px; border: 2px solid transparent; border-left: 5px solid #252525; border-right: 0; }
.ttl.open::before { top: 5px; border: 2px solid transparent; border-top: 5px solid #252525; border-bottom: 0; }
.ttl label { display: flex; align-items: center; gap: 4px; }
.grab::after { content: ""; position: absolute; right: 3px; top: 6px; width: 8px; height: 1px; background: repeating-linear-gradient(90deg, #9a9a9a 0 1px, transparent 1px 2px); box-shadow: none; }
.rows { display: flex; flex-direction: column; gap: 4px; }
.props .rows { margin: 0 6px 0 5px; }
.n1 { padding: 5px 0 4px; }
.n2 { padding: 13px 0 4px; }
.n3 { padding: 6px 0 4px; }
.line { height: 12px; padding-left: 5px; }
.color { display: flex; padding-left: 0; gap: 10px; }
.field { display: grid; grid-template-columns: 38px minmax(0, 1fr); height: 12px; }
.field > :first-child { padding-left: 5px; }
.box { display: flex; align-items: center; gap: 3px; padding-left: 2px; background: linear-gradient(#999, #a9a9a9); border: 1px solid #4f4f4f; border-radius: 3px; }
.box .ic { width: 9px; height: 9px; }
.box input { width: 100%; height: 10px; }
.tabs { background: #6b6b6b; padding-left: 5px; gap: 6px; }
.tabs .group.dark > button { width: 13px; background: #4a4a4a; }
.tabs .group.dark > button .ic { opacity: .75; }
.tabs .group.dark > .on { background: #5674b8; }
.crumb { display: flex; align-items: center; gap: 4px; height: 22px; padding-left: 6px; font-family: "DejaVu Sans", sans-serif; }
.r1 { padding: 6px 0 3px; }
.pair { display: grid; grid-template-columns: 67px minmax(0, 1fr); }
.pair > :first-child { padding-left: 5px; }
.r2 { padding: 6px 0 4px; }
.cols { display: grid; grid-template-columns: minmax(0, 1fr) minmax(0, 1fr); gap: 6px; }
.cap { display: block; height: 13px; line-height: 13px; padding-left: 5px; }
.r2 .stack, .rate { margin-bottom: 1px; }
.checks { display: flex; justify-content: space-between; height: 13px; padding: 0 16px 0 2px; }
.props .rows.r3 { padding: 6px 0; gap: 2px; }
.checks.grid { display: grid; grid-template-columns: 1fr 1fr; height: 28px; padding: 0 0 0 2px; column-gap: 6px; }
.depth { display: grid; grid-template-columns: 69px minmax(0, 1fr); }
.depth > :first-child { padding-left: 5px; }
.r4 { padding: 6px 0 4px; }
.r4 .check { height: 14px; padding-left: 2px; }

/* timeline */
.right { border-left: 1px solid #222; }
.timeline { flex: none; display: flex; flex-direction: column; background: #444; }
.track { position: relative; height: 42px; padding: 0 11px 0 10px; }
.range { display: block; height: 100%; background: repeating-linear-gradient(90deg, #606060 0 1px, #707070 1px 37px); }
.now { position: absolute; left: 10px; top: 0; bottom: 0; width: 2px; background: #4fbf2f; }
.ruler { display: flex; justify-content: space-between; height: 10px; line-height: 10px; padding: 0 14px 0 12px; background: #828282; font-family: "DejaVu Sans", sans-serif; }
.ruler span { display: flex; justify-content: center; width: 0; }
.timeline .duo { flex: 1; }
.timeline .duo > :last-child { border-radius: 0; }

/* viewports */
.view { position: relative; flex: 1; min-height: 0; overflow: hidden; background: #353535; }
.view3d .view { background: #3b3b3b; }
.uv { border-right: 1px solid #151515; }
.view > svg { display: block; width: 100%; height: 100%; }
.persp { position: absolute; left: 13px; top: 5px; color: #eee; }
.obname { position: absolute; left: 44px; bottom: 3px; color: #eee; }

/* pop-up menus */
.popup { position: absolute; z-index: 5; color: #e6e6e6; background: rgba(22, 22, 22, .95); border-radius: 4px; box-shadow: 0 2px 6px rgba(0, 0, 0, .7); }
.popup ul { display: grid; grid-auto-rows: 1fr; align-items: center; }
.add { left: 172px; top: 195px; width: 63px; height: 161px; }
.add h4 { height: 19px; padding-left: 5px; font: 7px/19px "DejaVu Sans", sans-serif; color: #aaa; border-bottom: 1px solid #2c2c2c; }
.add ul { height: 138px; margin-top: 2px; }
.add li { position: relative; padding-left: 18px; margin: 0 1px; }
.sub::after { content: ""; position: absolute; right: 4px; top: 4px; border: 2px solid transparent; border-left: 3px solid #777; border-right: 0; }
.add .hot { color: #0b0b0b; background: linear-gradient(#7d9fe4, #4f7acb); }
.textures { left: 235px; top: 264px; width: 99px; padding-top: 2px; border-top-left-radius: 0; }
.textures li { padding-left: 18px; }
.two { height: 25px; }
.many { height: 167px; margin-top: 4px; border-top: 1px solid #2c2c2c; }
```
FILE: script.js
```js
const NS = "http://www.w3.org/2000/svg";
const RAD = Math.PI / 180;

function add(svg, name, attrs) {
  const el = document.createElementNS(NS, name);
  for (const key in attrs) el.setAttribute(key, attrs[key]);
  svg.appendChild(el);
  return el;
}
const pt = p => p[0].toFixed(2) + " " + p[1].toFixed(2);

/* UV layout: flat projection of the sphere over the unit square */
(function drawUV() {
  const svg = document.getElementById("uv-mesh");
  const cx = 244, cy = 520, R = 79.5;
  add(svg, "rect", { x: 164, y: 440, width: 160, height: 160, fill: "#474747" });
  let grid = "";
  for (let i = 0; i <= 8; i++) grid += `M${164.5 + i * 20} 440V600M164 ${440.5 + i * 20}H324`;
  add(svg, "path", { d: grid, stroke: "#424242", fill: "none" });
  add(svg, "circle", { cx, cy, r: R, fill: "#75573a" });
  let lines = "", dots = "";
  const at = (i, j) => [cx + R * Math.cos(j * 11.25 * RAD) * Math.sin(i * 11.25 * RAD), cy + R * Math.sin(j * 11.25 * RAD)];
  for (let j = -8; j <= 8; j++) {
    const row = [], col = [];
    for (let i = -8; i <= 8; i++) {
      const p = at(i, j);
      row.push(pt(p));
      col.push(pt(at(j, i)));
      dots += `M${(p[0] - .9).toFixed(2)} ${(p[1] - .9).toFixed(2)}h1.8v1.8h-1.8z`;
    }
    lines += "M" + row.join("L") + "M" + col.join("L");
  }
  add(svg, "path", { d: lines, stroke: "#c56c10", "stroke-width": 1.7, fill: "none" });
  add(svg, "path", { d: lines, stroke: "#3a1e02", "stroke-width": .8, fill: "none" });
  add(svg, "path", { d: dots, fill: "#ff9214" });
  add(svg, "path", { d: "M163.500 584v12M163.500 604v12M148 600.500h12M167 600.500h12", stroke: "#bbb", "stroke-width": .7 });
  add(svg, "path", { d: "M163.500 592l8 8.500-8 8-8-8z", fill: "none", stroke: "#d99", "stroke-dasharray": "3 3" });
})();

/* 3D viewport: floor grid, shaded sphere in edit mode, manipulator */
(function draw3D() {
  const svg = document.getElementById("mesh");
  add(svg, "path", {
    d: "M488 414L992 409M488 441L992 436M488 476L992 469M488 594L992 590M601 396L430 644M647 396L520 644M691 396L631 644M778 396L857 644M821 396L970 644M866 396L1080 644",
    stroke: "#464646", fill: "none"
  });
  add(svg, "path", { d: "M488 525L992 516", stroke: "#2c702c" });
  add(svg, "path", { d: "M737 396L743 644", stroke: "#602828" });

  const cx = 740.5, cy = 519.5, tilt = 46 * RAD, dist = 3.73, focal = 296;
  function vert(i, j) {
    const lat = j * 11.25 * RAD, lon = i * 11.25 * RAD;
    const x = Math.cos(lat) * Math.sin(lon), y = Math.sin(lat), z = Math.cos(lat) * Math.cos(lon);
    const v = [x, y * Math.cos(tilt) - z * Math.sin(tilt), y * Math.sin(tilt) + z * Math.cos(tilt)];
    const k = focal / (dist - v[2]);
    return { v, s: [cx + v[0] * k, cy - v[1] * k], front: v[2] > 1 / dist, sel: i < 0 || (i === 0 && j >= 4 && j < 8) };
  }
  const norm = a => { const l = Math.hypot(...a); return a.map(c => c / l); };
  const dot = (a, b) => Math.max(0, a[0] * b[0] + a[1] * b[1] + a[2] * b[2]);
  const key = norm([-.42, .14, .88]), fill = norm([.52, .42, .7]), low = norm([.9, -.5, .1]), top = norm([-.5, .8, .3]);

  add(svg, "circle", { cx, cy, r: 82, fill: "#606066" });
  for (let j = -8; j < 8; j++) for (let i = -16; i < 16; i++) {
    const q = [vert(i, j), vert(i + 1, j), vert(i + 1, j + 1), vert(i, j + 1)];
    const n = norm([0, 1, 2].map(a => q[0].v[a] + q[1].v[a] + q[2].v[a] + q[3].v[a]));
    if (n[2] < .2) continue;
    const light = .32 + .14 * dot(n, key) + .3 * Math.pow(dot(n, key), 22) + .22 * Math.pow(dot(n, fill), 9) + .16 * dot(n, low) + .2 * dot(n, top);
    const sel = i < 0 && (i < -1 || j >= 4);
    const rgb = sel ? [light * 245 + 56, light * 240 + 32, light * 235 + 4] : [light * 238, light * 238, light * 250 + 4];
    const c = "rgb(" + rgb.map(x => Math.min(255, Math.round(x))).join() + ")";
    add(svg, "path", { d: "M" + q.map(p => pt(p.s)).join("L") + "Z", fill: c, stroke: c, "stroke-width": .4 });
  }
  const d = { bb: "", bo: "", fb: "", fo: "", pb: "", po: "", qb: "", qo: "" };
  for (let j = -8; j <= 8; j++) for (let i = -16; i < 16; i++) {
    const a = vert(i, j);
    for (const b of [vert(i + 1, j), j < 8 ? vert(i, j + 1) : null]) {
      if (!b) continue;
      d[(a.front || b.front ? "f" : "b") + (a.sel && b.sel ? "o" : "b")] += "M" + pt(a.s) + "L" + pt(b.s);
    }
    const m = a.front ? .8 : .6;
    d[(a.front ? "p" : "q") + (a.sel ? "o" : "b")] += `M${(a.s[0] - m).toFixed(2)} ${(a.s[1] - m).toFixed(2)}h${2 * m}v${2 * m}h${-2 * m}z`;
  }
  add(svg, "path", { d: d.bb, stroke: "#26262a", "stroke-width": .6, opacity: .55, fill: "none" });
  add(svg, "path", { d: d.bo, stroke: "#a8804e", "stroke-width": .6, opacity: .55, fill: "none" });
  add(svg, "path", { d: d.qb, fill: "#222", opacity: .6 });
  add(svg, "path", { d: d.qo, fill: "#b98646", opacity: .5 });
  add(svg, "path", { d: d.fb, stroke: "#101010", "stroke-width": .8, fill: "none" });
  add(svg, "path", { d: d.fo, stroke: "#f2a238", "stroke-width": .8, fill: "none" });
  add(svg, "path", { d: d.pb, fill: "#111" });
  add(svg, "path", { d: d.po, fill: "#f99f25" });
  add(svg, "ellipse", { cx: 740.5, cy: 451, rx: 7, ry: 2.5, fill: "#111", opacity: .8 });
  add(svg, "circle", { cx: 740.5, cy: 565, r: 3, fill: "#222", opacity: .5 });

  add(svg, "circle", { cx: 704.5, cy: 521.5, r: 9, fill: "none", stroke: "#fff0dc" });
  add(svg, "path", { d: "M703.500 513L700.500 490", stroke: "#1818c8" });
  add(svg, "path", { d: "M699.500 479L696 491H703.500Z", fill: "#0c0cd8" });
  add(svg, "path", { d: "M703.500 529V553", stroke: "#c81818" });
  add(svg, "path", { d: "M701 565L697.500 552H705Z", fill: "#dd0b0b" });
  add(svg, "path", { d: "M713 520H750", stroke: "#18b018" });
  add(svg, "path", { d: "M758 520L749 516.500V523.500Z", fill: "#0ccc0c" });
  add(svg, "circle", { cx: 741, cy: 520, r: 5, fill: "none", stroke: "#eee", "stroke-dasharray": "2 2" });
  add(svg, "circle", { cx: 741, cy: 520, r: 5, fill: "none", stroke: "#c33", "stroke-dasharray": "2 2", "stroke-dashoffset": 2 });
  add(svg, "path", { d: "M728 520h10M744 520h10M741 508v9M741 523v9", stroke: "#111", "stroke-width": .8 });

  add(svg, "path", { d: "M504.500 627V616", stroke: "#1d1d9c" });
  add(svg, "path", { d: "M505 627.500H520", stroke: "#18a818" });
  add(svg, "path", { d: "M504.500 628V637", stroke: "#a01818" });
  add(svg, "path", { d: "M522 623l2 3 2-3M524 626l-1 3", stroke: "#18a818", "stroke-width": .8, fill: "none" });
  add(svg, "path", { d: "M505 612h3l-3 3h3", stroke: "#1d1d9c", "stroke-width": .8, fill: "none" });
  add(svg, "path", { d: "M507 633l3 4M510 633l-3 4", stroke: "#a01818", "stroke-width": .8, fill: "none" });
})();
```
